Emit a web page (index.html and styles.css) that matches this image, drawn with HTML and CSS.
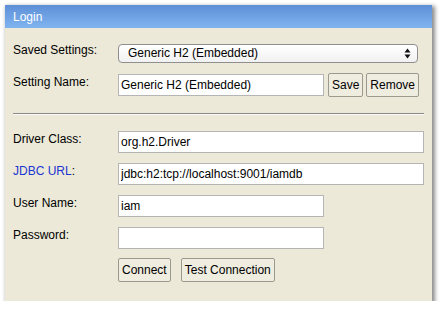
FILE: index.html
```html
<!DOCTYPE html>
<html>
<head>
<meta charset="utf-8">
<title>Login</title>
<link rel="stylesheet" href="styles.css">
</head>
<body>
<div class="panel">
  <div class="panel-title">Login</div>
  <form class="panel-body">
    <div class="row">
      <label class="lbl">Saved Settings:</label>
      <div class="select-wrap">
        <select class="select">
          <option>Generic H2 (Embedded)</option>
        </select>
        <svg class="arrows" width="7" height="11" viewBox="0 0 7 11"><path d="M3.5 0.5 L6.5 4.5 L0.5 4.5 Z M3.5 10.5 L6.5 6.5 L0.5 6.5 Z" fill="#111"/></svg>
      </div>
    </div>
    <div class="row">
      <label class="lbl">Setting Name:</label>
      <input class="field short" type="text" value="Generic H2 (Embedded)">
      <button type="button" class="btn first">Save</button>
      <button type="button" class="btn">Remove</button>
    </div>
    <div class="sep"><hr class="rule"></div>
    <div class="row">
      <label class="lbl">Driver Class:</label>
      <input class="field long" type="text" value="org.h2.Driver">
    </div>
    <div class="row">
      <label class="lbl"><a class="link" href="#">JDBC URL</a>:</label>
      <input class="field long" type="text" value="jdbc:h2:tcp://localhost:9001/iamdb">
    </div>
    <div class="row">
      <label class="lbl">User Name:</label>
      <input class="field short" type="text" value="iam">
    </div>
    <div class="row">
      <label class="lbl">Password:</label>
      <input class="field short" type="password" value="">
    </div>
    <div class="row">
      <span class="lbl"></span>
      <button type="button" class="btn big">Connect</button>
      <button type="button" class="btn big gap">Test Connection</button>
    </div>
  </form>
</div>
</body>
</html>
```
FILE: styles.css
```css
html, body {
  margin: 0;
  padding: 0;
  background: #ffffff;
}
body {
  padding: 5px 0 0 5px;
  font-family: "Liberation Sans", Arial, sans-serif;
  font-size: 12px;
  color: #000;
}
.panel {
  width: 427px;
  height: 296px;
  background: #ece9d8;
  box-shadow: 2px 2px 4px 1px rgba(0,0,0,0.45);
  box-sizing: border-box;
  overflow: hidden;
}
.panel-title {
  height: 23px;
  box-sizing: border-box;
  padding: 5px 0 0 8px;
  color: #ffffff;
  font-size: 12px;
  line-height: 14px;
  background: linear-gradient(#5d8fd7, #80b4f0);
}
.panel-body {
  margin: 0;
  padding: 9px 8px 0 8px;
}
.row {
  display: flex;
  align-items: center;
  height: 32px;
}
.lbl {
  width: 105px;
  flex: none;
  align-self: flex-start;
  padding-top: 6px;
  line-height: 14px;
}
.link {
  color: #1b36d3;
  text-decoration: none;
}
.select-wrap {
  position: relative;
  width: 300px;
  height: 19px;
}
.select {
  appearance: none;
  -webkit-appearance: none;
  width: 100%;
  height: 19px;
  margin: 0;
  box-sizing: border-box;
  border: 1px solid #8f8f8f;
  border-radius: 4px;
  background: linear-gradient(#ffffff, #f1f1f1);
  font-family: "Liberation Sans", Arial, sans-serif;
  font-size: 12px;
  padding: 0 0 0 9px;
  color: #000;
}
.arrows {
  position: absolute;
  right: 7px;
  top: 4px;
}
.field {
  box-sizing: border-box;
  height: 22px;
  margin: 0;
  border: 1px solid #b5b5b5;
  background: #fff;
  font-family: "Liberation Sans", Arial, sans-serif;
  font-size: 12px;
  padding: 0 2px;
  color: #000;
  outline: none;
}
.short { width: 206px; }
.long { width: 306px; }
.btn {
  box-sizing: border-box;
  height: 24px;
  margin: 0 0 0 3px;
  padding: 0 3px;
  border: 1px solid #9c9a8e;
  border-radius: 2px;
  background: #efece0;
  font-family: "Liberation Sans", Arial, sans-serif;
  font-size: 12px;
  color: #000;
}
.btn.first { margin-left: 4px; }
.btn.big { margin-left: 0; }
.btn.big.gap { margin-left: 10px; }
.sep {
  height: 25px;
  display: flex;
  align-items: center;
}
.rule {
  width: 100%;
  margin: 0;
  border: none;
  border-top: 1px solid #888;
  border-bottom: 1px solid #fbfaf5;
}
```
